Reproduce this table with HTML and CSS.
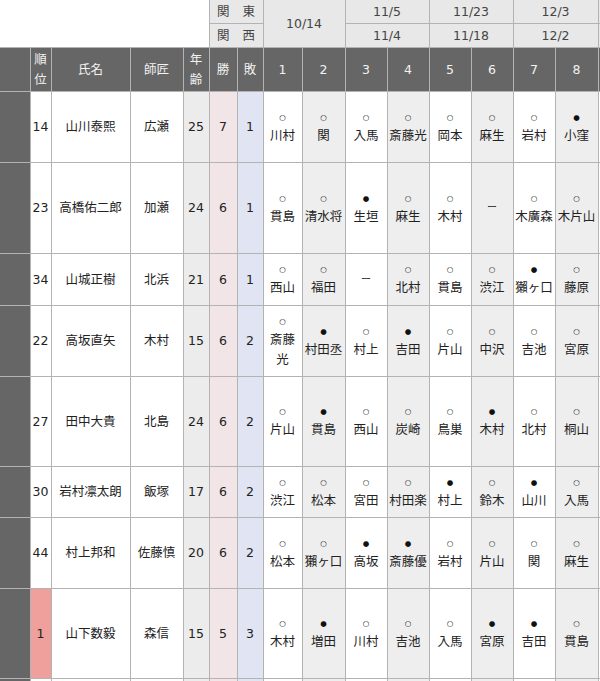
FILE: index.html
```html
<!DOCTYPE html>
<html lang="ja">
<head>
<meta charset="utf-8">
<title>順位表</title>
<link rel="stylesheet" href="styles.css">
</head>
<body>
<div class="board">
<table class="ranking">
  <colgroup>
    <col class="c-side">
    <col class="c-rank">
    <col class="c-name">
    <col class="c-master">
    <col class="c-age">
    <col class="c-win">
    <col class="c-loss">
    <col class="c-r1">
    <col class="c-r2">
    <col class="c-odd">
    <col class="c-even">
    <col class="c-odd">
    <col class="c-even">
    <col class="c-odd">
    <col class="c-last">
    <col class="c-more">
  </colgroup>
  <thead>
    <tr class="date-row first">
      <th class="blank" colspan="5" rowspan="2"></th>
      <th class="region" colspan="2"><span>関</span><span>東</span></th>
      <th colspan="2" rowspan="2">10/14</th>
      <th colspan="2">11/5</th>
      <th colspan="2">11/23</th>
      <th colspan="2">12/3</th>
      <th></th>
    </tr>
    <tr class="date-row second">
      <th class="region" colspan="2"><span>関</span><span>西</span></th>
      <th colspan="2">11/4</th>
      <th colspan="2">11/18</th>
      <th colspan="2">12/2</th>
      <th></th>
    </tr>
    <tr class="head-row">
      <th class="side"></th>
      <th>順<br>位</th>
      <th>氏名</th>
      <th>師匠</th>
      <th>年<br>齢</th>
      <th>勝</th>
      <th>敗</th>
      <th>1</th><th>2</th><th>3</th><th>4</th><th>5</th><th>6</th><th>7</th><th>8</th><th></th>
    </tr>
  </thead>
  <tbody>
    <tr class="h71">
      <td class="side"></td><td>14</td><td>山川泰熙</td><td>広瀬</td><td>25</td><td>7</td><td>1</td>
      <td><span class="mk">○</span>川村</td>
      <td><span class="mk">○</span>関</td>
      <td><span class="mk">○</span>入馬</td>
      <td><span class="mk">○</span>斎藤光</td>
      <td><span class="mk">○</span>岡本</td>
      <td><span class="mk">○</span>麻生</td>
      <td><span class="mk">○</span>岩村</td>
      <td><span class="mk">●</span>小窪</td>
      <td></td>
    </tr>
    <tr class="h91">
      <td class="side"></td><td>23</td><td>高橋佑二郎</td><td>加瀬</td><td>24</td><td>6</td><td>1</td>
      <td><span class="mk">○</span>貫島</td>
      <td><span class="mk">○</span>清水将</td>
      <td><span class="mk">●</span>生垣</td>
      <td><span class="mk">○</span>麻生</td>
      <td><span class="mk">○</span>木村</td>
      <td class="none">ー</td>
      <td><span class="mk">○</span>木廣森</td>
      <td><span class="mk">○</span>木片山</td>
      <td></td>
    </tr>
    <tr class="h52">
      <td class="side"></td><td>34</td><td>山城正樹</td><td>北浜</td><td>21</td><td>6</td><td>1</td>
      <td><span class="mk">○</span>西山</td>
      <td><span class="mk">○</span>福田</td>
      <td class="none">ー</td>
      <td><span class="mk">○</span>北村</td>
      <td><span class="mk">○</span>貫島</td>
      <td><span class="mk">○</span>渋江</td>
      <td><span class="mk">●</span>獺ヶ口</td>
      <td><span class="mk">○</span>藤原</td>
      <td></td>
    </tr>
    <tr class="h71">
      <td class="side"></td><td>22</td><td>高坂直矢</td><td>木村</td><td>15</td><td>6</td><td>2</td>
      <td><span class="mk">○</span>斎藤<br>光</td>
      <td><span class="mk">●</span>村田丞</td>
      <td><span class="mk">○</span>村上</td>
      <td><span class="mk">●</span>吉田</td>
      <td><span class="mk">○</span>片山</td>
      <td><span class="mk">○</span>中沢</td>
      <td><span class="mk">○</span>吉池</td>
      <td><span class="mk">○</span>宮原</td>
      <td></td>
    </tr>
    <tr class="h90">
      <td class="side"></td><td>27</td><td>田中大貴</td><td>北島</td><td>24</td><td>6</td><td>2</td>
      <td><span class="mk">○</span>片山</td>
      <td><span class="mk">●</span>貫島</td>
      <td><span class="mk">○</span>西山</td>
      <td><span class="mk">○</span>炭崎</td>
      <td><span class="mk">○</span>鳥巣</td>
      <td><span class="mk">●</span>木村</td>
      <td><span class="mk">○</span>北村</td>
      <td><span class="mk">○</span>桐山</td>
      <td></td>
    </tr>
    <tr class="h51">
      <td class="side"></td><td>30</td><td>岩村凛太朗</td><td>飯塚</td><td>17</td><td>6</td><td>2</td>
      <td><span class="mk">○</span>渋江</td>
      <td><span class="mk">○</span>松本</td>
      <td><span class="mk">○</span>宮田</td>
      <td><span class="mk">○</span>村田楽</td>
      <td><span class="mk">●</span>村上</td>
      <td><span class="mk">○</span>鈴木</td>
      <td><span class="mk">●</span>山川</td>
      <td><span class="mk">○</span>入馬</td>
      <td></td>
    </tr>
    <tr class="h71">
      <td class="side"></td><td>44</td><td>村上邦和</td><td>佐藤慎</td><td>20</td><td>6</td><td>2</td>
      <td><span class="mk">○</span>松本</td>
      <td><span class="mk">○</span>獺ヶ口</td>
      <td><span class="mk">●</span>高坂</td>
      <td><span class="mk">●</span>斎藤優</td>
      <td><span class="mk">○</span>岩村</td>
      <td><span class="mk">○</span>片山</td>
      <td><span class="mk">○</span>関</td>
      <td><span class="mk">○</span>麻生</td>
      <td></td>
    </tr>
    <tr class="h90">
      <td class="side"></td><td class="leader">1</td><td>山下数毅</td><td>森信</td><td>15</td><td>5</td><td>3</td>
      <td><span class="mk">○</span>木村</td>
      <td><span class="mk">●</span>増田</td>
      <td><span class="mk">○</span>川村</td>
      <td><span class="mk">○</span>吉池</td>
      <td><span class="mk">○</span>入馬</td>
      <td><span class="mk">●</span>宮原</td>
      <td><span class="mk">●</span>吉田</td>
      <td><span class="mk">○</span>貫島</td>
      <td></td>
    </tr>
    <tr class="h71">
      <td class="side"></td><td></td><td></td><td></td><td></td><td></td><td></td>
      <td></td><td></td><td></td><td></td><td></td><td></td><td></td><td></td><td></td>
    </tr>
  </tbody>
</table>
</div>
</body>
</html>
```

FILE: styles.css
```css
html, body {
  margin: 0;
  padding: 0;
  background: #fff;
  overflow: hidden;
}

.board {
  width: 600px;
  height: 681px;
  overflow: hidden;
}

.ranking {
  border-collapse: collapse;
  table-layout: fixed;
  width: 658px;
  font-family: "DejaVu Sans", "Noto Sans CJK JP", sans-serif;
  font-size: 12.5px;
  color: #222;
}

.ranking th,
.ranking td {
  border: 1px solid #b3b3b3;
  padding: 0 1px;
  text-align: center;
  vertical-align: middle;
  font-weight: normal;
  line-height: 19.5px;
  white-space: nowrap;
}

/* column widths and column tints */
.c-side   { width: 30px; background: #666; }
.c-rank   { width: 21px; }
.c-name   { width: 79px; }
.c-master { width: 53px; }
.c-age    { width: 26px; background: #ececec; }
.c-win    { width: 28px; background: #f1e5e8; }
.c-loss   { width: 26px; background: #e0e4f3; }
.c-r1     { width: 39px; }
.c-r2     { width: 43px; background: #eeeeee; }
.c-odd    { width: 42px; }
.c-even   { width: 42px; background: #eeeeee; }
.c-last   { width: 43px; background: #eeeeee; }
.c-more   { width: 60px; }

/* date header rows */
.date-row th {
  background: #e8e8e8;
  color: #444;
}
.date-row.first th {
  border-top: none;
  height: 23px;
}
.date-row.second th {
  height: 23px;
}
.ranking th.blank {
  background: #fff;
  border: none;
}
.region span {
  display: inline-block;
  width: 50%;
}

/* dark header */
.head-row th {
  background: #666;
  color: #f2f2f2;
  height: 43px;
}
.ranking .side {
  border-left: none;
  background: #666;
}

/* body rows */
.h71 td { height: 70px; }
.h91 td { height: 90px; }
.h52 td { height: 51px; }
.h51 td { height: 50px; }
.h90 td { height: 89px; }

.ranking td.leader {
  background: #ef9f9c;
}

.mk {
  display: block;
  font-size: 7.5px;
  line-height: 17px;
  height: 17px;
  color: #111;
}

.none {
  font-size: 10px;
  font-weight: bold;
}
```
